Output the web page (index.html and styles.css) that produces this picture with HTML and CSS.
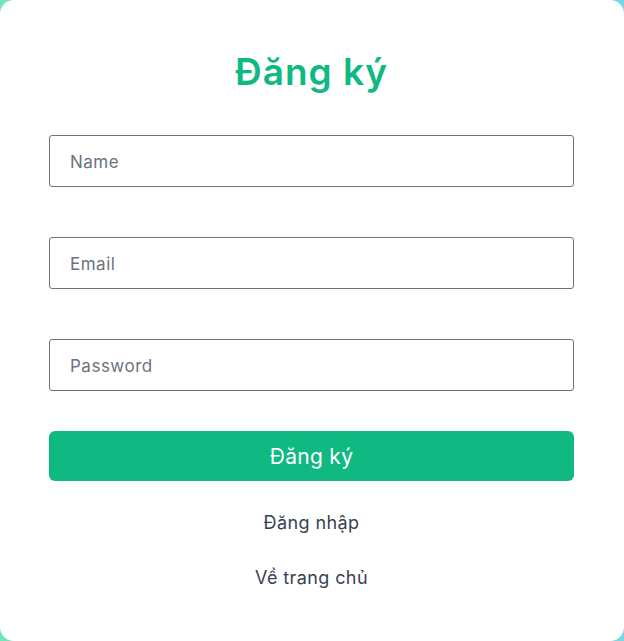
FILE: index.html
```html
<!DOCTYPE html>
<html lang="vi">
<head>
<meta charset="utf-8">
<title>Đăng ký</title>
<link rel="stylesheet" href="styles.css">
</head>
<body>
  <main class="card">
    <h1 class="title">Đăng ký</h1>
    <form class="form">
      <input class="field" type="text" placeholder="Name">
      <input class="field" type="email" placeholder="Email">
      <input class="field" type="password" placeholder="Password">
      <button class="submit" type="button">Đăng ký</button>
    </form>
    <nav class="links">
      <a class="link" href="#">Đăng nhập</a>
      <a class="link" href="#">Về trang chủ</a>
    </nav>
  </main>
</body>
</html>
```

FILE: styles.css
```css
* { box-sizing: border-box; }
html, body { height: 100%; }
body {
  margin: 0;
  background: linear-gradient(90deg, #6ee7b7 0%, #7cd4e6 100%);
  font-family: "Inter", "Open Sans", sans-serif;
  overflow: hidden;
}
.card {
  width: 624px;
  height: 641px;
  background: #fff;
  border-radius: 14px;
  padding: 47px 50px 0 49px;
  display: flex;
  flex-direction: column;
}
.title {
  margin: 0;
  text-align: center;
  color: #10b981;
  font-size: 37px;
  font-weight: 600;
  letter-spacing: 1px;
  line-height: 50px;
}
.form {
  margin-top: 38px;
  display: flex;
  flex-direction: column;
  gap: 50px;
}
.field {
  height: 52px;
  width: 100%;
  border: 1px solid #6b7280;
  border-radius: 3px;
  padding: 2px 20px 0;
  font-family: inherit;
  font-size: 17px;
  letter-spacing: 0.5px;
  color: #374151;
  outline: none;
}
.field::placeholder { color: #6b7280; }
.submit {
  margin-top: -10px;
  height: 50px;
  border: none;
  border-radius: 6px;
  background: #10b981;
  color: #fff;
  font-family: inherit;
  font-size: 21px;
  font-weight: 400;
  letter-spacing: 0.3px;
}
.links {
  display: flex;
  flex-direction: column;
  align-items: center;
  gap: 31px;
  margin-top: 30px;
}
.link {
  color: #374151;
  text-decoration: none;
  font-size: 18px;
  letter-spacing: 0.4px;
  line-height: 24px;
}
```
